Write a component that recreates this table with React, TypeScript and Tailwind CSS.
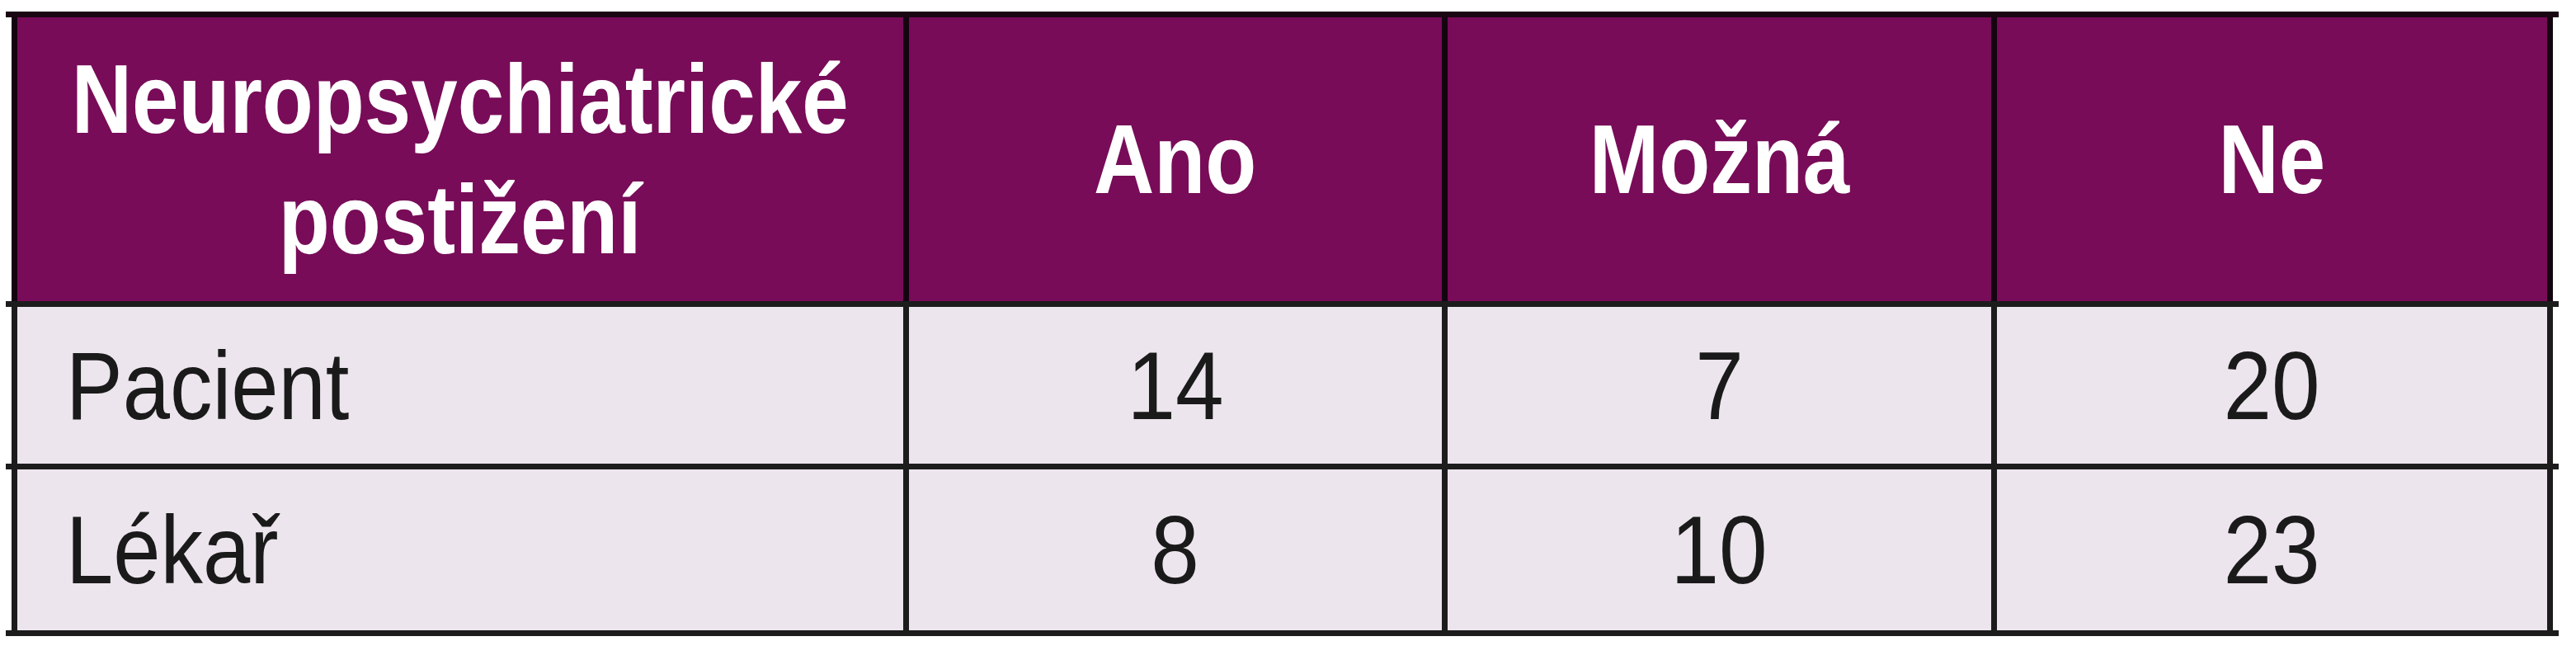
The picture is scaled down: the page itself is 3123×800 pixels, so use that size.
const header = ['Ano', 'Možná', 'Ne']

const rows = [
  { label: 'Pacient', values: ['14', '7', '20'], height: 'h-[190px]' },
  { label: 'Lékař', values: ['8', '10', '23'], height: 'h-[195px]' },
]

// column widths incl. the 7px left rule of each cell
const cols = ['w-[1081px]', 'w-[653px]', 'w-[666px]', 'w-[681px]']

function Rule({ dark }: { dark?: boolean }) {
  return <div className={`h-[7px] w-[3095px] ${dark ? 'bg-[#1a0513]' : 'bg-[#1c1c1c]'}`} />
}

export default function App() {
  return (
    <div
      className="min-h-[800px] w-[3123px] bg-white pt-[14px] pl-[7px]"
      style={{ fontFamily: '"Liberation Sans", Arial, sans-serif' }}
    >
      <Rule dark />

      {/* Header */}
      <div className="ml-[7px] flex h-[344px] w-[3081px]">
        <div className={`${cols[0]} flex items-center justify-center border-l-[7px] border-[#140410] bg-[#780c58]`}>
          <div className="scale-x-[0.86] whitespace-nowrap text-center text-[118px] font-bold leading-[146px] text-white">
            Neuropsychiatrické
            <br />
            postižení
          </div>
        </div>
        {header.map((h, i) => (
          <div
            key={h}
            className={`${cols[i + 1]} flex items-center justify-center border-l-[7px] border-[#140410] bg-[#780c58] ${
              i === header.length - 1 ? 'border-r-[7px]' : ''
            }`}
          >
            <span className="inline-block scale-x-[0.86] text-[118px] font-bold leading-none text-white">{h}</span>
          </div>
        ))}
      </div>

      {rows.map((r) => (
        <div key={r.label}>
          <Rule />
          <div className={`ml-[7px] flex w-[3081px] ${r.height}`}>
            <div className={`${cols[0]} flex items-center border-l-[7px] border-[#1c1c1c] bg-[#ede5ed] pl-[59px]`}>
              <span className="inline-block origin-left scale-x-[0.88] text-[117px] leading-none text-[#1a1a1a]">
                {r.label}
              </span>
            </div>
            {r.values.map((v, i) => (
              <div
                key={i}
                className={`${cols[i + 1]} flex items-center justify-center border-l-[7px] border-[#1c1c1c] bg-[#ede5ed] ${
                  i === r.values.length - 1 ? 'border-r-[7px]' : ''
                }`}
              >
                <span className="inline-block scale-x-[0.9] text-[117px] leading-none text-[#1a1a1a]">{v}</span>
              </div>
            ))}
          </div>
        </div>
      ))}
      <Rule />
    </div>
  )
}
